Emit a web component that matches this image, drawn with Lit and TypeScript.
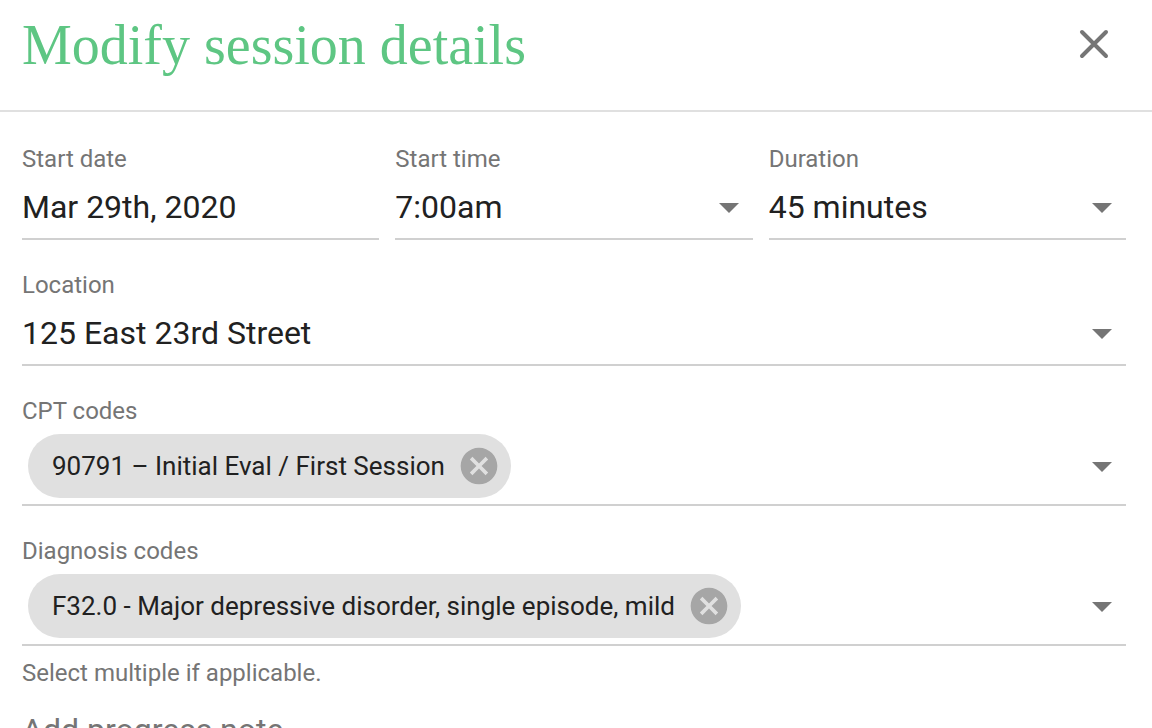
import { LitElement, html, css, svg } from "lit";
import { customElement, property, state } from "lit/decorators.js";

const arrow = svg`<path d="M7 10l5 5 5-5z" fill="currentColor" />`;

const base = css`
  * {
    box-sizing: border-box;
  }
  button {
    display: flex;
    padding: 0;
    border: 0;
    background: none;
    color: inherit;
    cursor: pointer;
  }
  .field {
    display: flex;
    flex-direction: column;
    gap: 2px;
    min-width: 0;
    border-bottom: 2px solid #d0d0d0;
  }
  .label {
    color: #757575;
    font-size: 24px;
    line-height: 30px;
  }
  .arrow {
    width: 48px;
    height: 48px;
    color: #757575;
  }
`;

@customElement("select-field")
class SelectField extends LitElement {
  @property() label = "";
  @property({ attribute: false }) options: string[] = [];

  static styles = [
    base,
    css`
      :host {
        display: block;
        min-width: 0;
      }
      .control {
        display: grid;
        align-items: center;
      }
      .control > * {
        grid-area: 1 / 1;
      }
      .select {
        appearance: none;
        width: 100%;
        height: 62px;
        padding: 0 48px 0 0;
        border: 0;
        outline: 0;
        background: none;
        color: #212121;
        font: inherit;
        font-size: 32px;
      }
      .arrow {
        justify-self: end;
        pointer-events: none;
      }
    `,
  ];

  render() {
    return html`
      <div class="field">
        <label class="label" for="select">${this.label}</label>
        <div class="control">
          <select class="select" id="select">
            ${this.options.map((option) => html`<option>${option}</option>`)}
          </select>
          <svg class="arrow" viewBox="0 0 24 24" aria-hidden="true">${arrow}</svg>
        </div>
      </div>
    `;
  }
}

@customElement("chips-field")
class ChipsField extends LitElement {
  @property() label = "";
  @property({ attribute: false }) chips: string[] = [];
  @state() private removed: string[] = [];

  static styles = [
    base,
    css`
      :host {
        display: block;
      }
      .control {
        display: flex;
        align-items: center;
        justify-content: space-between;
        min-height: 76px;
        padding: 6px 0 6px 6px;
      }
      .chips {
        display: flex;
        flex-wrap: wrap;
        gap: 12px;
      }
      .chip {
        display: flex;
        align-items: center;
        gap: 12px;
        min-height: 64px;
        padding: 0 10px 0 24px;
        border-radius: 32px;
        background: #e0e0e0;
        color: #212121;
        font-size: 26px;
        line-height: 32px;
      }
      .remove {
        color: #a6a6a6;
      }
      .cancel {
        width: 44px;
        height: 44px;
      }
    `,
  ];

  render() {
    const visible = this.chips.filter((chip) => !this.removed.includes(chip));
    return html`
      <div class="field" role="group" aria-labelledby="label">
        <span class="label" id="label">${this.label}</span>
        <div class="control">
          <div class="chips">
            ${visible.map(
              (chip) => html`
                <span class="chip">
                  <span>${chip}</span>
                  <button
                    class="remove"
                    type="button"
                    aria-label="Remove ${chip}"
                    @click=${() => (this.removed = [...this.removed, chip])}
                  >
                    <svg class="cancel" viewBox="0 0 24 24" aria-hidden="true">
                      <path
                        fill="currentColor"
                        d="M12 2C6.47 2 2 6.47 2 12s4.47 10 10 10 10-4.47 10-10S17.53 2 12 2zm5 13.59L15.59 17 12 13.41 8.41 17 7 15.59 10.59 12 7 8.41 8.41 7 12 10.59 15.59 7 17 8.41 13.41 12 17 15.59z"
                      />
                    </svg>
                  </button>
                </span>
              `
            )}
          </div>
          <button type="button" aria-label="Open ${this.label}">
            <svg class="arrow" viewBox="0 0 24 24" aria-hidden="true">${arrow}</svg>
          </button>
        </div>
      </div>
    `;
  }
}

@customElement("app-root")
class AppRoot extends LitElement {
  static styles = [
    base,
    css`
      :host {
        display: block;
        height: 100vh;
        overflow: hidden;
        background: #fff;
        color: #212121;
        font-family: Roboto, "Liberation Sans", sans-serif;
      }
      .header {
        display: flex;
        align-items: flex-start;
        justify-content: space-between;
        padding: 14px 34px 34px 22px;
        border-bottom: 2px solid #e0e0e0;
      }
      .title {
        margin: 0;
        color: #5ec683;
        font-family: "Liberation Serif", serif;
        font-size: 56px;
        font-weight: 400;
        line-height: 62px;
      }
      .close {
        padding-top: 6px;
        color: #757575;
      }
      .close-icon {
        width: 48px;
        height: 48px;
      }
      .form {
        display: flex;
        flex-direction: column;
        gap: 30px;
        padding: 32px 26px 32px 22px;
      }
      .row {
        display: grid;
        grid-template-columns: repeat(3, minmax(0, 1fr));
        gap: 16px;
      }
      .input {
        width: 100%;
        height: 62px;
        padding: 0;
        border: 0;
        outline: 0;
        background: none;
        color: #212121;
        font: inherit;
        font-size: 32px;
      }
      .helper {
        margin: 12px 0 0;
        color: #757575;
        font-size: 24px;
        line-height: 30px;
      }
      .notes {
        display: flex;
        flex-direction: column;
        margin-top: -8px;
      }
      .note {
        width: 100%;
        height: 120px;
        padding: 0;
        border: 0;
        border-bottom: 2px solid #d0d0d0;
        outline: 0;
        resize: none;
        background: none;
        color: #212121;
        font: inherit;
        font-size: 32px;
        line-height: 40px;
      }
      .note::placeholder {
        color: #757575;
      }
    `,
  ];

  render() {
    return html`
      <header class="header">
        <h1 class="title">Modify session details</h1>
        <button class="close" type="button" aria-label="Close">
          <svg class="close-icon" viewBox="0 0 48 48" aria-hidden="true">
            <path d="M12 12L36 36M36 12L12 36" fill="none" stroke="currentColor" stroke-width="4" stroke-linecap="round" />
          </svg>
        </button>
      </header>
      <form class="form">
        <div class="row">
          <div class="field">
            <label class="label" for="date">Start date</label>
            <input class="input" id="date" type="text" value="Mar 29th, 2020" />
          </div>
          <select-field label="Start time" .options=${["7:00am"]}></select-field>
          <select-field label="Duration" .options=${["45 minutes"]}></select-field>
        </div>
        <select-field label="Location" .options=${["125 East 23rd Street"]}></select-field>
        <chips-field label="CPT codes" .chips=${["90791 – Initial Eval / First Session"]}></chips-field>
        <div>
          <chips-field
            label="Diagnosis codes"
            .chips=${["F32.0 - Major depressive disorder, single episode, mild"]}
          ></chips-field>
          <p class="helper">Select multiple if applicable.</p>
        </div>
        <div class="notes">
          <textarea class="note" aria-label="Add progress note" placeholder="Add progress note"></textarea>
        </div>
      </form>
    `;
  }
}
